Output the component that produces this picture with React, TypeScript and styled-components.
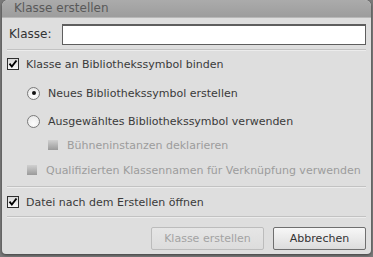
import styled, { createGlobalStyle } from "styled-components";

const GlobalStyle = createGlobalStyle`
  html, body {
    margin: 0;
    padding: 0;
    background: #7a7a7a;
  }
  body {
    font-family: "DejaVu Sans", Verdana, sans-serif;
    font-size: 11px;
  }
`;

const App = () => {
  return (
    <>
      <GlobalStyle />
      <Page>
        <Dialog>
          <TitleBar>Klasse erstellen</TitleBar>
          <Body>
            <ClassRow>
              <Label>Klasse:</Label>
              <TextInput />
            </ClassRow>
            <Divider />

            <OptionRow $height={26} $indent={0}>
              <CheckBox $checked />
              <OptionText>Klasse an Bibliothekssymbol binden</OptionText>
            </OptionRow>
            <OptionRow $height={32} $indent={20}>
              <Radio $selected />
              <OptionText>Neues Bibliothekssymbol erstellen</OptionText>
            </OptionRow>
            <OptionRow $height={24} $indent={20}>
              <Radio />
              <OptionText>Ausgewähltes Bibliothekssymbol verwenden</OptionText>
            </OptionRow>
            <OptionRow $height={24} $indent={41}>
              <DisabledBox />
              <OptionText $disabled>Bühneninstanzen deklarieren</OptionText>
            </OptionRow>
            <OptionRow $height={26} $indent={20}>
              <DisabledBox />
              <OptionText $disabled>
                Qualifizierten Klassennamen für Verknüpfung verwenden
              </OptionText>
            </OptionRow>
            <Divider $top={3} />

            <OptionRow $height={28} $indent={0}>
              <CheckBox $checked />
              <OptionText>Datei nach dem Erstellen öffnen</OptionText>
            </OptionRow>
            <Divider />

            <ButtonBar>
              <Button disabled $width={113}>Klasse erstellen</Button>
              <Button $width={93}>Abbrechen</Button>
            </ButtonBar>
          </Body>
        </Dialog>
      </Page>
    </>
  );
};

export default App;

// check mark for the ticked boxes
const CheckMark = () => (
  <svg width="12" height="12" viewBox="0 0 12 12">
    <path
      d="M1.8 5.6 L4.6 9 L10.2 1.8"
      fill="none"
      stroke="#000"
      strokeWidth="2.3"
      strokeLinejoin="miter"
    />
  </svg>
);

const CheckBox = ({ $checked }: { $checked?: boolean }) => (
  <Box>{$checked && <CheckMark />}</Box>
);

const Page = styled.div`
  width: 373px;
  height: 257px;
  padding: 0 2px 3px 2px;
  box-sizing: border-box;
  display: flex;
`;

const Dialog = styled.div`
  flex: 1;
  display: flex;
  flex-direction: column;
  border-radius: 6px 6px 4px 4px;
  overflow: hidden;
  background: #dedede;
  box-shadow: 0 1px 3px rgba(0, 0, 0, 0.5);
`;

const TitleBar = styled.div`
  height: 18px;
  line-height: 17px;
  padding-left: 12px;
  font-size: 12px;
  color: #595959;
  background: linear-gradient(#ababab, #9d9d9d);
  border-bottom: 1px solid #b8b8b8;
  box-sizing: border-box;
`;

const Body = styled.div`
  flex: 1;
  display: flex;
  flex-direction: column;
  padding: 0 5px 0 5px;
`;

const ClassRow = styled.div`
  height: 31px;
  display: flex;
  align-items: center;
  gap: 8px;
  padding-left: 2px;
`;

const Label = styled.span`
  font-size: 12px;
  color: #333;
  width: 45px;
`;

const TextInput = styled.input`
  width: 304px;
  height: 21px;
  box-sizing: border-box;
  border: 1px solid #5e5e5e;
  border-top-width: 2px;
  background: #fff;
  margin-top: 2px;
  outline: none;
`;

const Divider = styled.div<{ $top?: number }>`
  height: 1px;
  margin-top: ${(p) => p.$top ?? 0}px;
  background: #c2c2c2;
  border-bottom: 1px solid #ececec;
`;

const OptionRow = styled.div<{ $height: number; $indent: number }>`
  height: ${(p) => p.$height}px;
  display: flex;
  align-items: center;
  gap: 7px;
  padding-left: ${(p) => p.$indent}px;
`;

const OptionText = styled.span<{ $disabled?: boolean }>`
  color: ${(p) => (p.$disabled ? "#9c9c9c" : "#3a3a3a")};
  white-space: nowrap;
`;

const Box = styled.span`
  width: 12px;
  height: 12px;
  box-sizing: border-box;
  border: 1px solid #2e2e2e;
  background: linear-gradient(#d8d8d8, #f8f8f8);
  display: flex;
  align-items: center;
  justify-content: center;
  flex: none;

  svg {
    display: block;
  }
`;

const DisabledBox = styled.span`
  width: 10px;
  height: 10px;
  margin-right: 2px;
  background: linear-gradient(#d0d0d0, #9a9a9a);
  flex: none;
`;

const Radio = styled.span<{ $selected?: boolean }>`
  width: 13px;
  height: 13px;
  margin-right: 1px;
  box-sizing: border-box;
  border-radius: 50%;
  border: 1px solid #7a7a7a;
  background: radial-gradient(circle at 50% 70%, #fdfdfd, #e4e4e4);
  display: flex;
  align-items: center;
  justify-content: center;
  flex: none;

  &::after {
    content: "";
    width: 4px;
    height: 4px;
    border-radius: 50%;
    background: ${(p) => (p.$selected ? "#111" : "transparent")};
  }
`;

const ButtonBar = styled.div`
  flex: 1;
  display: flex;
  justify-content: flex-end;
  align-items: flex-start;
  gap: 9px;
  padding: 9px 0 0 0;
`;

const Button = styled.button<{ $width: number }>`
  width: ${(p) => p.$width}px;
  height: 23px;
  font-family: "DejaVu Sans", Verdana, sans-serif;
  font-size: 11px;
  border-radius: 2px;
  color: #333;
  border: 1px solid #6f6f6f;
  background: linear-gradient(#f7f7f7, #dcdcdc);
  padding: 0;

  &:disabled {
    color: #a3a3a3;
    border-color: #bcbcbc;
    background: linear-gradient(#e6e6e6, #dcdcdc);
  }
`;
